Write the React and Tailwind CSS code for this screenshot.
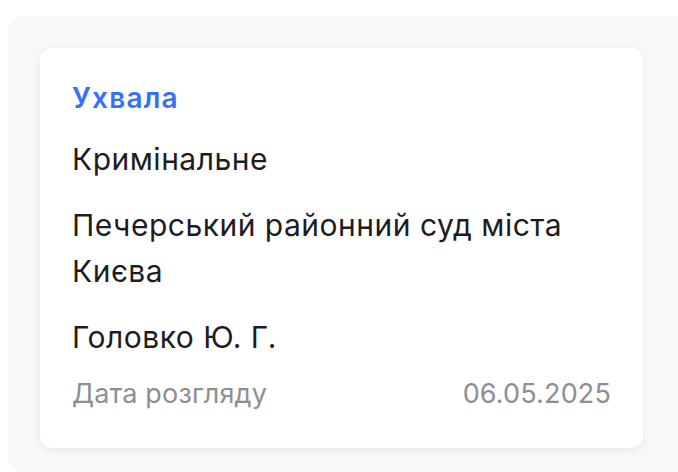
export default function App() {
  return (
    <div className="min-h-screen w-full overflow-hidden bg-white pl-2 pt-4 font-['Inter',sans-serif]">
      <div className="w-[700px] rounded-l-2xl bg-[#f7f8fa] pb-6 pl-8 pt-8">
        <div className="flex w-[603px] flex-col gap-5 rounded-xl bg-white px-8 pb-10 pt-8 shadow-[0_2px_8px_rgba(0,0,0,0.07)]">
          <div className="text-[28px] font-semibold leading-[36px] tracking-[1.2px] text-[#3670f5]">Ухвала</div>
          <div className="text-[30px] leading-[46px] tracking-[0.5px] text-[#1d1d1f]">Кримінальне</div>
          <div className="text-[30px] leading-[46px] tracking-[0.5px] text-[#1d1d1f]">
            Печерський районний суд міста Києва
          </div>
          <div className="text-[30px] leading-[46px] tracking-[0.5px] text-[#1d1d1f]">Головко Ю. Г.</div>
          <div className="flex items-center justify-between text-[27px] leading-[28px] tracking-[0.15px] text-[#8e8e93]">
            <span>Дата розгляду</span>
            <span>06.05.2025</span>
          </div>
        </div>
      </div>
    </div>
  );
}
